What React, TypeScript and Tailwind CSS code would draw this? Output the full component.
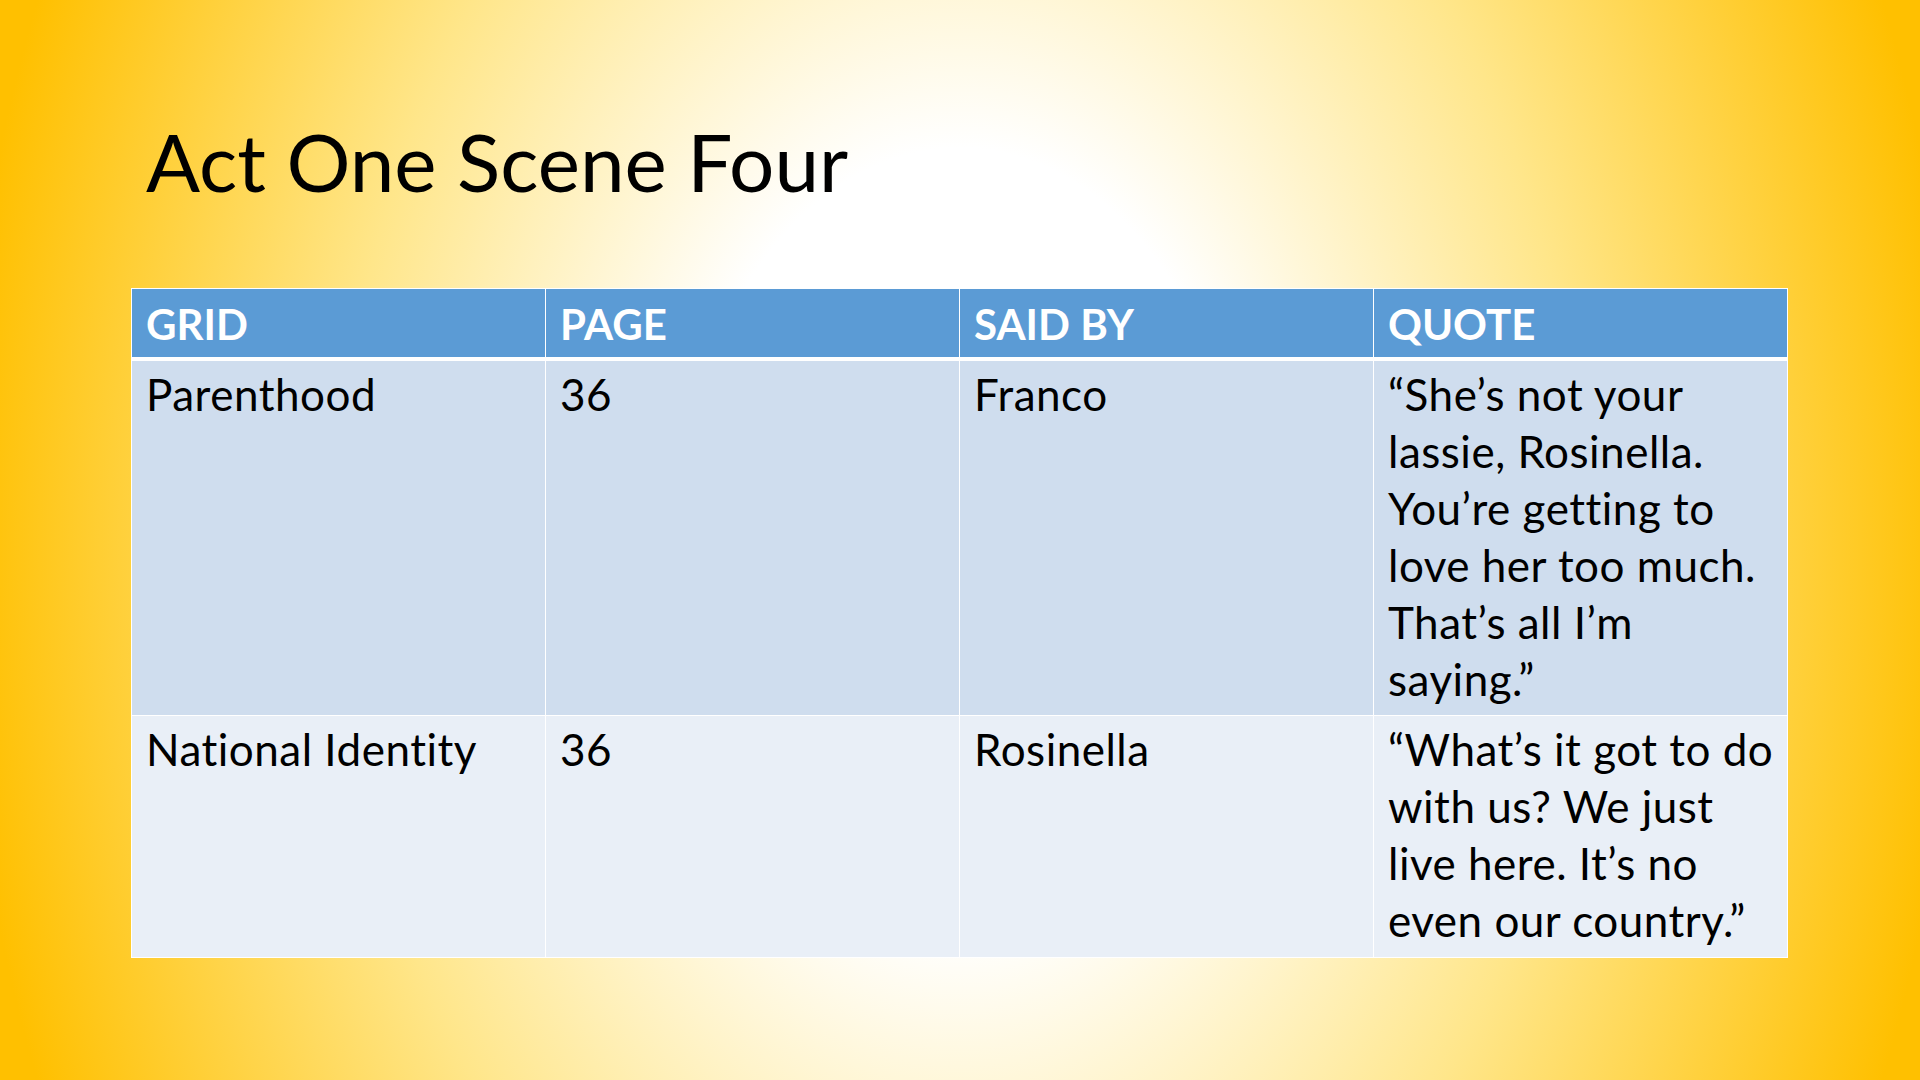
import React from "react";

const headers = ["GRID", "PAGE", "SAID BY", "QUOTE"];

const rows: { cells: string[]; quote: string[]; bg: string; pad: string }[] = [
  {
    cells: ["Parenthood", "36", "Franco"],
    quote: [
      "\u201CShe\u2019s not your",
      "lassie, Rosinella.",
      "You\u2019re getting to",
      "love her too much.",
      "That\u2019s all I\u2019m",
      "saying.\u201D",
    ],
    bg: "bg-[#cfddee]",
    pad: "pt-[5px] pb-[7px]",
  },
  {
    cells: ["National Identity", "36", "Rosinella"],
    quote: [
      "\u201CWhat\u2019s it got to do",
      "with us? We just",
      "live here. It\u2019s no",
      "even our country.\u201D",
    ],
    bg: "bg-[#e9eff7]",
    pad: "pt-[5px] pb-[8px]",
  },
];

export default function App() {
  return (
    <div
      className="w-[1920px] h-[1080px] overflow-hidden bg-[radial-gradient(ellipse_1000px_1400px_at_50%_50%,#ffffff_0%,#ffffff_28%,#ffe68a_62%,#ffc000_100%)] text-black"
      style={{ fontFamily: "Lato, 'Open Sans', sans-serif" }}
    >
      <div className="pl-[146px] pt-[121px]">
        <h1 className="text-[80px] leading-[80px] font-normal">Act One Scene Four</h1>
      </div>
      <div className="ml-[131px] mt-[87px] w-[1657px] bg-white p-px flex flex-col gap-px leading-[57px]">
        <div className="grid grid-cols-4 gap-px mb-[3px]">
          {headers.map((h) => (
            <div key={h} className="bg-[#5b9bd5] text-white text-[42px] font-bold px-[14px] pt-[7px] pb-[4px]">
              {h}
            </div>
          ))}
        </div>
        {rows.map((r, i) => (
          <div key={i} className="grid grid-cols-4 gap-px text-[44px] tracking-[0.5px]">
            {r.cells.map((c, j) => (
              <div key={j} className={`${r.bg} px-[14px] ${r.pad}`}>
                {c}
              </div>
            ))}
            <div className={`${r.bg} px-[14px] ${r.pad}`}>
              {r.quote.map((l, k) => (
                <div key={k} className="whitespace-nowrap">
                  {l}
                </div>
              ))}
            </div>
          </div>
        ))}
      </div>
    </div>
  );
}
